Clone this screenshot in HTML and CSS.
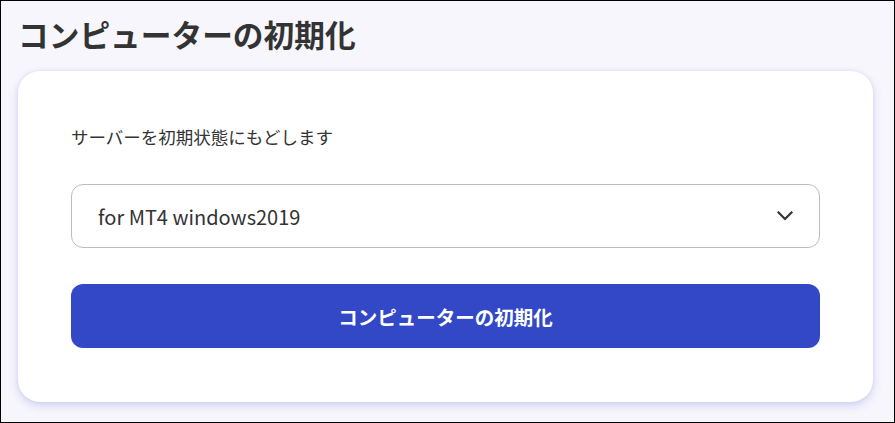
FILE: index.html
```html
<!DOCTYPE html>
<html lang="ja">
<head>
<meta charset="utf-8">
<title>コンピューターの初期化</title>
<link rel="stylesheet" href="styles.css">
</head>
<body>
<div class="page">
  <h1 class="title">コンピューターの初期化</h1>
  <section class="card">
    <p class="label">サーバーを初期状態にもどします</p>
    <div class="select">
      <span class="select-value">for MT4 windows2019</span>
      <svg class="chevron" width="16" height="10" viewBox="0 0 16 10" aria-hidden="true">
        <polyline points="1.5,1.5 8,8 14.5,1.5" fill="none" stroke="#333" stroke-width="2.2" stroke-linecap="square"/>
      </svg>
    </div>
    <button class="btn" type="button">コンピューターの初期化</button>
  </section>
</div>
</body>
</html>
```

FILE: styles.css
```css
* { box-sizing: border-box; }
html, body { margin: 0; padding: 0; }
body {
  font-family: "Noto Sans CJK JP", "Noto Sans", sans-serif;
  color: #333;
}
.page {
  width: 895px;
  height: 423px;
  border: 1px solid #000;
  background: #f7f6fc;
  padding: 12px 21px 0 17px;
  overflow: hidden;
}
.title {
  margin: 0 0 16px 0;
  font-size: 30.7px;
  line-height: 42px;
  font-weight: 700;
  color: #333;
}
.card {
  background: #fff;
  border-radius: 22px;
  box-shadow: 0 4px 10px rgba(90, 100, 220, 0.22), 0 0 4px rgba(90, 100, 220, 0.12);
  padding: 53px 53px 54px 53px;
  display: flex;
  flex-direction: column;
}
.label {
  margin: 0;
  font-size: 17.5px;
  line-height: 25px;
  color: #333;
}
.select {
  margin-top: 35px;
  height: 64px;
  border: 1px solid #bcbcbc;
  border-radius: 12px;
  display: flex;
  align-items: center;
  justify-content: space-between;
  padding: 0 26px 0 26px;
}
.select-value {
  font-size: 20px;
  color: #333;
}
.chevron { display: block; }
.btn {
  margin-top: 36px;
  height: 64px;
  border: none;
  border-radius: 12px;
  background: #3248c6;
  color: #fff;
  font-family: "Noto Sans CJK JP", "Noto Sans", sans-serif;
  font-size: 19.5px;
  font-weight: 700;
  cursor: pointer;
}
```
